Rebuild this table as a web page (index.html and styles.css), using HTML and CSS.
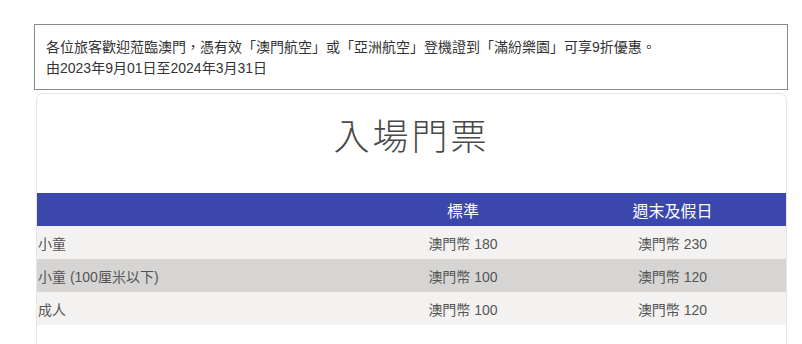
FILE: index.html
```html
<!DOCTYPE html>
<html lang="zh-Hant">
<head>
<meta charset="utf-8">
<link rel="stylesheet" href="styles.css">
</head>
<body>
<div class="page">
  <div class="notice">
    <p>各位旅客歡迎蒞臨澳門，憑有效「澳門航空」或「亞洲航空」登機證到「滿紛樂園」可享9折優惠。</p>
    <p>由2023年9月01日至2024年3月31日</p>
  </div>
  <div class="card">
    <h1 class="title">入場門票</h1>
    <table class="prices">
      <thead>
        <tr><th class="c1"></th><th class="c2">標準</th><th class="c3">週末及假日</th></tr>
      </thead>
      <tbody>
        <tr><td class="label">小童</td><td>澳門幣 180</td><td>澳門幣 230</td></tr>
        <tr class="alt"><td class="label">小童 (100厘米以下)</td><td>澳門幣 100</td><td>澳門幣 120</td></tr>
        <tr><td class="label">成人</td><td>澳門幣 100</td><td>澳門幣 120</td></tr>
      </tbody>
    </table>
  </div>
</div>
</body>
</html>
```
FILE: styles.css
```css
html, body {
  margin: 0;
  padding: 0;
  background: #fff;
}
body {
  font-family: "Liberation Sans", "Noto Sans CJK TC", sans-serif;
  color: #333;
}
.page {
  padding: 24px 14px 0 34px;
}
.notice {
  border: 1px solid #8a8a8a;
  padding: 12px 11px 10px;
  font-size: 14px;
  line-height: 21px;
  color: #333;
}
.notice p {
  margin: 0;
}
.card {
  margin: 3px 1px 0 2px;
  border: 1px solid #e6e6e6;
  border-bottom: none;
  border-radius: 7px 7px 0 0;
  height: 260px;
  box-sizing: border-box;
}
.title {
  margin: 0;
  padding: 16px 0 0;
  height: 83px;
  text-align: center;
  font-family: "Noto Sans CJK TC", sans-serif;
  font-weight: 300;
  font-size: 36px;
  line-height: 48px;
  letter-spacing: 3px;
  color: #484848;
  box-sizing: content-box;
}
.prices {
  width: 100%;
  border-collapse: collapse;
  font-size: 14px;
  color: #555;
}
.prices th {
  background: #3c47ae;
  color: #fff;
  font-weight: normal;
  font-size: 16px;
  height: 33px;
  padding: 0;
  text-align: center;
}
.c1 { width: 330px; }
.c2 { width: 192px; }
.prices td {
  height: 33px;
  padding: 0;
  text-align: center;
  background: #f3f2f1;
}
.prices td.label {
  text-align: left;
  padding-left: 1px;
}
.prices tr.alt td {
  background: #d6d5d4;
}
```
